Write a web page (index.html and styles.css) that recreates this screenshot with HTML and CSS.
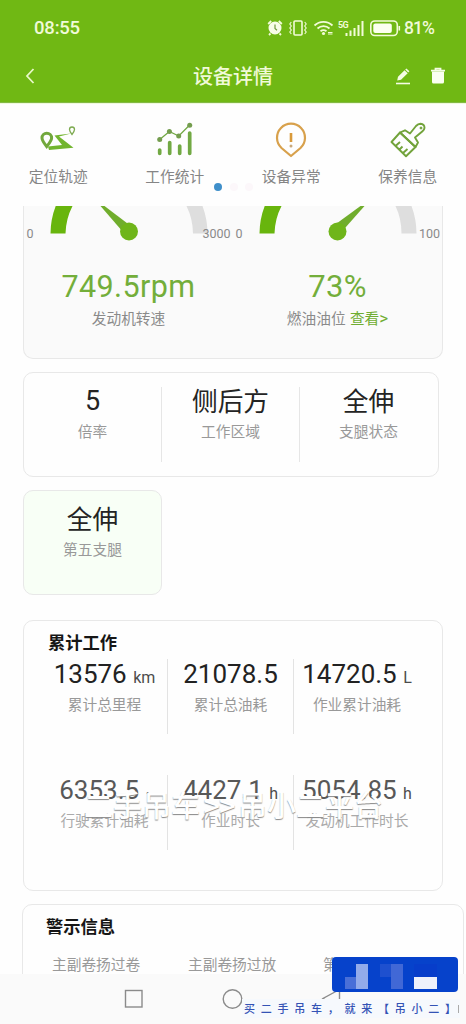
FILE: index.html
```html
<!DOCTYPE html>
<html lang="zh-CN">
<head>
<meta charset="utf-8">
<title>设备详情</title>
<link rel="stylesheet" href="styles.css">
</head>
<body>
<div class="phone">
  <header class="header">
    <div class="status">
      <span class="clock">08:55</span>
      <svg class="status-icons" width="136" height="20" viewBox="0 0 136 20" fill="none" stroke="#f2fbd8">
        <circle cx="8" cy="10" r="6.500" fill="#f7fce8" stroke="none"/>
        <path d="M1.200 6l3-3M14.800 6l-3-3M3.500 15.500L2 17M12.500 15.500l1.500 1.500" stroke-width="1.800"/>
        <path d="M8 6.500v4l2 1.800" stroke="#6f9a3a" stroke-width="1.200"/>
        <rect x="27" y="3" width="8" height="14" rx="1" stroke-width="1.600"/>
        <path d="M24.300 4l-1.500 2 1.500 2-1.500 2 1.500 2-1.500 2 1.500 2M37.700 4l1.500 2-1.500 2 1.500 2-1.500 2 1.500 2-1.500 2" stroke-width="1.100"/>
        <path d="M47.500 7.500a13 13 0 0 1 18 0M50.500 10.500a9 9 0 0 1 12 0M53.500 13.300a5 5 0 0 1 6 0" stroke-width="1.800"/>
        <circle cx="56.500" cy="15.500" r="1.600" fill="#f2fbd8" stroke="none"/>
        <path d="M61 14.500h4.500M61 16h4.500" stroke-width="1"/>
        <path d="M79.500 15v3M83.500 12.500v5.500M87.500 10v8M91.500 7v11M95.500 3v15" stroke-width="2"/>
        <rect x="103.800" y="3" width="26.500" height="14.500" rx="4" stroke-width="1.600"/>
        <rect x="106.300" y="5.500" width="18.500" height="9.500" rx="2" fill="#fbfff0" stroke="none"/>
        <path d="M132.300 8v4.500" stroke-width="1.600"/>
        <text class="net" x="71" y="10">5G</text>
      </svg>
      <span class="percent">81%</span>
    </div>
    <div class="nav">
      <svg class="back" width="12" height="18" viewBox="0 0 12 18"><path d="M9.500 2L3 9l6.500 7" fill="none" stroke="#e8f8c8" stroke-width="1.800"/></svg>
      <h1 class="title">设备详情</h1>
      <div class="actions">
        <svg width="16" height="18" viewBox="0 0 16 18"><path d="M1 16.500h14" stroke="#f4fce4" stroke-width="1.600"/><path d="M2.200 13.500l.8-3.700L9.500 3.200l3.200 3L6 12.800zM10.200 2.500l1.200-1.100 3 2.900-1.200 1.200z" fill="#f4fce4"/></svg>
        <svg width="16" height="18" viewBox="0 0 16 18"><path d="M1 3.700h14M5.500 3V1.700h5V3" stroke="#f4fce4" stroke-width="1.800" fill="none"/><path d="M2 4.500h12V15a1.500 1.500 0 0 1-1.500 1.500h-9A1.500 1.500 0 0 1 2 15z" fill="#fafff0"/></svg>
      </div>
    </div>
  </header>

  <nav class="tabs">
    <a class="tab">
      <svg width="40" height="40" viewBox="0 0 40 40" fill="none">
        <path d="M10 24.500l14-1.500-7.500-9.500L33 11.500l-12 3 14.500 11.300L11 28z" fill="#72b52f"/>
        <path d="M8.700 24.500C5.500 20.500 4 18.600 4 16a4.800 4.800 0 0 1 9.600 0c0 2.600-1.700 4.500-4.900 8.500z" stroke="#72a83c" stroke-width="3"/>
        <path d="M34 12.500c-1.800-2.500-2.500-3.400-2.500-5a2.500 2.500 0 0 1 5 0c0 1.600-.7 2.500-2.500 5z" stroke="#7daa50" stroke-width="1.300"/>
      </svg>
      <span>定位轨迹</span>
    </a>
    <a class="tab">
      <svg width="40" height="40" viewBox="0 0 40 40" fill="none" stroke="#72a944">
        <path d="M4.700 17.500l9.700-8 9.300 4.500L34.700 3" stroke-width="1.300"/>
        <g fill="#749d4e" stroke="none"><circle cx="4.700" cy="17.500" r="2.500"/><circle cx="14.400" cy="9.500" r="2.500"/><circle cx="23.700" cy="14" r="2.500"/><circle cx="34.700" cy="3.200" r="2.500"/></g>
        <path d="M4.700 28v3.300M14.700 20.500v10.800M24.700 24v7.300M34.700 11v20.300" stroke-width="3.700" stroke-linecap="round"/>
      </svg>
      <span>工作统计</span>
    </a>
    <a class="tab">
      <svg width="40" height="40" viewBox="0 0 40 40" fill="none" stroke="#d8a14c">
        <path d="M20 34L10.500 26A14 14 0 1 1 29.500 26z" stroke-width="2.200" stroke-linejoin="round"/>
        <path d="M20 11v9" stroke-width="2.600" stroke="#d99a3a"/><circle cx="20" cy="24" r="1.500" fill="#c9a87a" stroke="none"/>
      </svg>
      <span>设备异常</span>
    </a>
    <a class="tab">
      <svg width="40" height="40" viewBox="0 0 40 40" fill="none" stroke="#72a33b" stroke-width="1.900" stroke-linejoin="round">
        <path d="M12 10.500l5-2.200 5 3.200 6-7.500q2-2.200 4.500-2.200 4 .5 4 4-.2 2-2 3.500L27 15.500l3 5-2.500 4.500z"/>
        <path d="M12 10.500L3.500 20 18 34.300 27.500 25zM7.500 24l4.500-4M11.500 27.500l3-3M15 31l4.500-4"/>
        <circle cx="33" cy="6" r="1" fill="#72a33b" stroke-width="1"/>
      </svg>
      <span>保养信息</span>
    </a>
    <i class="page-dot"></i><i class="page-dot faint one"></i><i class="page-dot faint two"></i>
  </nav>

  <main class="content">
    <section class="card gauges">
      <div class="gauge left">
        <svg class="dial" width="208" height="45" viewBox="0 0 208 45">
          <path d="M25.500 27.500A78.500 78.500 0 0 1 30.700 0H47.500A63.500 63.500 0 0 0 40.500 27.500z" fill="#68b50d"/>
          <path d="M182.500 27.500A78.500 78.500 0 0 0 177.500 0H161.500A63.500 63.500 0 0 1 168 27.500z" fill="#dedede"/>
          <path d="M75.500 0h4l25 19-6.500 7z" fill="#70ad2c"/>
          <circle cx="104" cy="25.500" r="9" fill="#6fb51a"/>
          <g class="scale"><text x="1.500" y="31.800">0</text><text x="177.500" y="31.800">3000</text></g>
        </svg>
        <strong>749.5rpm</strong>
        <span>发动机转速</span>
      </div>
      <div class="gauge right">
        <svg class="dial" width="210" height="45" viewBox="0 0 210 45">
          <path d="M26.500 27.500A78.500 78.500 0 0 1 31.700 0H48.500A63.500 63.500 0 0 0 41.500 27.500z" fill="#68b50d"/>
          <path d="M183.500 27.500A78.500 78.500 0 0 0 178.500 0H162.500A63.500 63.500 0 0 1 168.500 27.500z" fill="#dedede"/>
          <path d="M131.500 0h-4L101.500 19l7 7z" fill="#70ad2c"/>
          <circle cx="104.500" cy="25.500" r="9" fill="#6fb51a"/>
          <g class="scale"><text x="2.500" y="31.800">0</text><text x="186" y="31.800">100</text></g>
        </svg>
        <strong class="fuel">73%</strong>
        <span>燃油油位 <a class="view">查看<em>&gt;</em></a></span>
      </div>
    </section>

    <section class="card trio">
      <div class="cell"><strong class="digit">5</strong><span>倍率</span></div>
      <div class="cell"><strong>侧后方</strong><span>工作区域</span></div>
      <div class="cell"><strong>全伸</strong><span>支腿状态</span></div>
    </section>

    <section class="card single">
      <div class="cell"><strong>全伸</strong><span>第五支腿</span></div>
    </section>

    <section class="card totals">
      <h2>累计工作</h2>
      <div class="grid">
        <div class="total"><p><b>13576</b> <small>km</small></p><span>累计总里程</span></div>
        <div class="total"><p><b>21078.5</b></p><span>累计总油耗</span></div>
        <div class="total"><p><b>14720.5</b> <small>L</small></p><span>作业累计油耗</span></div>
        <div class="total pale"><p><b>6353.5</b> <small>·</small></p><span>行驶累计油耗</span></div>
        <div class="total pale"><p><b>4427.1</b> <small>h</small></p><span>作业时长</span></div>
        <div class="total pale"><p><b>5054.85</b> <small>h</small></p><span>发动机工作时长</span></div>
      </div>
      <div class="watermark">二手吊车<span>&gt;&gt;</span>吊小二平台</div>
    </section>

    <section class="card alerts">
      <h2>警示信息</h2>
      <div class="alert-row"><span>主副卷扬过卷</span><span>主副卷扬过放</span><span>第</span></div>
    </section>
  </main>

  <footer class="system">
    <svg class="keys" width="260" height="34" viewBox="0 0 260 34" fill="none" stroke="#8b8b8b" stroke-width="1.400">
      <rect x="5.500" y="8.500" width="16.500" height="16.500"/>
      <circle cx="112.500" cy="17" r="9.300"/>
      <path d="M219.500 7.500L203 16.500l16.500 9z"/>
    </svg>
    <div class="slogan">买二手吊车，就来【吊小二】<i></i></div>
  </footer>
  <div class="badge">
    <svg width="126" height="35" viewBox="0 0 126 35"><path fill="#496fd8" d="M13 20h11v12H13z"/><path fill="#93abea" d="M24 7h12v25H24z"/><path fill="#1e50cf" d="M48 7h11v13H48z"/><path fill="#4168d6" d="M59 7h12v25H59z"/><path fill="#073dca" d="M82 7h23v13H82z"/><path fill="#eef1fb" d="M82 20h23v12H82z"/></svg>
  </div>
</div>
</body>
</html>
```
FILE: styles.css
```css
* { box-sizing: border-box; }
body { margin: 0; background: #fefefe; font-family: Roboto, "Noto Sans CJK SC", sans-serif; color: #222; }
h1, h2, p { margin: 0; }
svg { display: block; }
.phone { position: relative; width: 466px; height: 1024px; overflow: hidden; display: flex; flex-direction: column; }

.header { height: 103px; background: #70b814; border-bottom: 1px solid #83b944; color: #f0fad8; flex: none; }
.status { height: 55px; padding: 1px 31px 0 34px; display: flex; align-items: center; }
.clock { font: 500 18.500px/20px Roboto, sans-serif; letter-spacing: -.2px; }
.status-icons { margin: 0 1px 0 auto; }
.net { font: 700 9px Roboto, sans-serif; fill: #f2fbd8; stroke: none; letter-spacing: -.6px; }
.percent { width: 31px; font: 500 17.500px/20px Roboto, sans-serif; letter-spacing: -1px; white-space: nowrap; }
.nav { height: 42px; display: grid; grid-template-columns: 110px 1fr 110px; align-items: center; }
.back { margin-left: 24px; }
.title { font: 500 20px/30px "Noto Sans CJK SC", sans-serif; text-align: center; }
.actions { display: flex; justify-content: flex-end; gap: 19px; padding-right: 20px; }

.tabs { position: relative; flex: none; height: 103px; padding-top: 18px; display: flex; background: #fefefe; border-top: 1px solid #eff9dc; }
.tab { width: 116.500px; display: flex; flex-direction: column; align-items: center; }
.tab span { font: 400 14.700px/22px "Noto Sans CJK SC", sans-serif; color: #858585; margin-top: 3px; }
.page-dot { position: absolute; left: 214px; top: 79px; width: 8px; height: 8px; border-radius: 50%; background: #3f8fca; }
.page-dot.faint { background: #fcf7fa; }
.page-dot.one { left: 230px; }
.page-dot.two { left: 245px; }

.content { height: 768px; overflow: hidden; padding-left: 23px; flex: none; }
.card { border: 1.500px solid #e8e8e8; border-radius: 10px; background: #fefefe; }
.gauges { width: 420px; height: 153px; border-top: 0; border-radius: 0 0 10px 10px; background: #fafafa; display: flex; }
.gauge { width: 209px; display: flex; flex-direction: column; align-items: center; }
.gauge strong { font: 400 30.500px/36px Roboto, sans-serif; color: #73ae3a; margin-top: 18px; letter-spacing: .4px; }
.gauge .fuel { font-size: 31px; letter-spacing: .3px; }
.gauge span { font: 400 14.700px/22px "Noto Sans CJK SC", sans-serif; color: #8a8a8a; margin-top: 2px; }
.gauge .view { color: #70ad31; margin-left: 1px; }
.view em { font: 400 17px/20px Roboto, sans-serif; }
.scale { font: 400 12.500px Roboto, sans-serif; fill: #8a8a8a; }

.trio { width: 416px; height: 105px; margin-top: 13px; display: flex; padding-top: 14px; }
.cell { width: 138px; height: 75px; display: flex; flex-direction: column; align-items: center; }
.trio .cell:first-child, .single .cell { width: 137px; }
.cell + .cell { border-left: 1px solid #e6e6e6; }
.cell strong { font: 400 25.700px/32px "Noto Sans CJK SC", sans-serif; color: #242424; margin-top: -3px; }
.cell .digit { font: 400 27px/34px Roboto, sans-serif; height: 32px; }
.cell span { font: 400 14.700px/22px "Noto Sans CJK SC", sans-serif; color: #999; margin-top: 4px; }
.single { width: 139px; height: 105px; margin-top: 13px; padding-top: 14px; background: #f8fff6; }

.totals { position: relative; width: 420px; height: 271px; margin-top: 25px; padding-top: 9px; }
h2 { font: 700 17.300px/24px "Noto Sans CJK SC", sans-serif; color: #161616; padding-left: 24px; }
.grid { display: grid; grid-template-columns: 126px 126px 126px; grid-template-rows: 75px 75px; row-gap: 41px; padding-left: 18px; margin-top: 5px; }
.total { display: flex; flex-direction: column; align-items: center; white-space: nowrap; }
.total:not(:nth-child(3n)) { border-right: 1px solid #e3e3e3; }
.total p { height: 30px; font: 400 26px/30px Roboto, sans-serif; }
.total b { font: 400 26px/30px Roboto, sans-serif; letter-spacing: 0; }
.total small { font: 400 16px/20px Roboto, sans-serif; color: #4c4c4c; margin-left: 0; }
.total span { font: 400 14.700px/22px "Noto Sans CJK SC", sans-serif; color: #999; margin-top: 4px; }
.pale { color: #585858; }
.pale span { color: #aaa; }
.watermark { position: absolute; left: 60px; top: 164px; font: 500 29px/38px "Noto Sans CJK SC", sans-serif; color: #fff; white-space: nowrap; text-shadow: 0 1px 1px #888; }
.watermark span { display: inline-block; width: 38px; text-align: center; letter-spacing: -1px; }

.alerts { width: 442px; height: 100px; margin: 13px 0 0 -1px; padding-top: 9px; }
.alerts h2 { padding-left: 23px; }
.alert-row { display: grid; grid-template-columns: 136px 135px 100px; padding: 15px 0 0 29px; font: 400 14.700px/22px "Noto Sans CJK SC", sans-serif; color: #999; }

.system { position: relative; height: 50px; background: #fafafa; padding: 8px 0 0 120px; flex: none; }
.slogan { position: absolute; left: 242px; top: 25px; height: 19px; padding-left: 2px; background: #f6f9fd; font: 500 11px/18px "Noto Sans CJK SC", sans-serif; letter-spacing: 5.750px; color: #3453b5; white-space: nowrap; width: 218px; overflow: hidden; }
.slogan i { position: absolute; right: 1px; top: 6px; width: 1px; height: 8px; background: #aaa; }
.badge { position: absolute; left: 332px; top: 957px; width: 126px; height: 35px; background: #0642cb; border-radius: 4px; overflow: hidden; }
```
